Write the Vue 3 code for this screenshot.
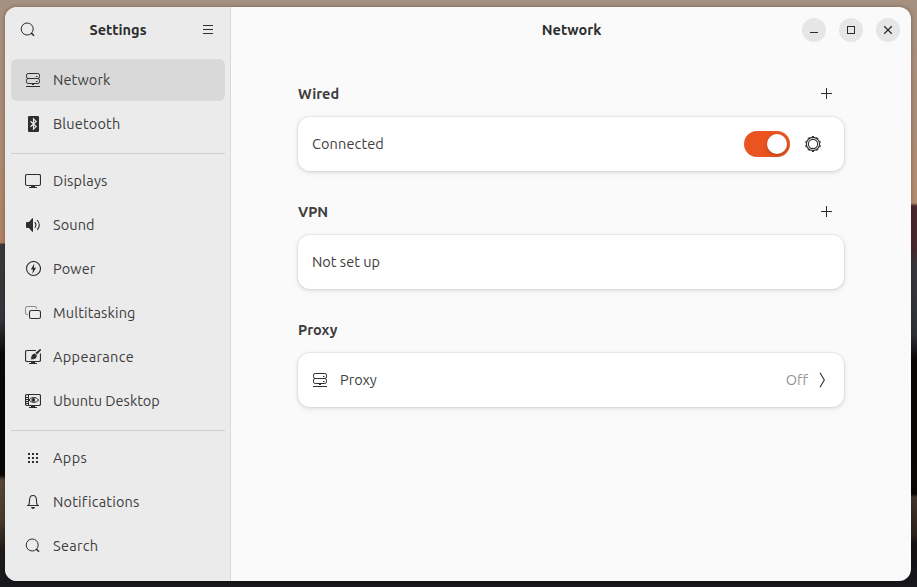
<template>
  <div class="desktop">
    <div class="window">
      <aside class="sidebar">
        <header class="sidebar-header">
          <button class="flat-btn" aria-label="Search">
            <svg class="icon" viewBox="0 0 16 16" v-html="icons.search"></svg>
          </button>
          <h1 class="title">Settings</h1>
          <button class="flat-btn" aria-label="Menu">
            <svg class="icon" viewBox="0 0 16 16" v-html="icons.menu"></svg>
          </button>
        </header>
        <nav class="nav">
          <div v-for="(group, i) in groups" :key="i" class="nav-group">
            <a
              v-for="item in group"
              :key="item.label"
              class="nav-item"
              :class="{ active: item.label === current }"
              @click="current = item.label"
            >
              <svg class="icon" viewBox="0 0 16 16" v-html="icons[item.icon]"></svg>
              <span :style="{ letterSpacing: item.spacing + 'px' }">{{ item.label }}</span>
            </a>
          </div>
        </nav>
      </aside>

      <main class="content">
        <header class="content-header">
          <h2 class="title">Network</h2>
          <div class="controls">
            <button v-for="name in ['minimize', 'maximize', 'close']" :key="name" class="control" :aria-label="name">
              <svg class="icon" viewBox="0 0 16 16" v-html="icons[name]"></svg>
            </button>
          </div>
        </header>

        <div class="sections">
          <section>
            <div class="section-head">
              <h3>Wired</h3>
              <svg class="icon" viewBox="0 0 16 16" v-html="icons.plus"></svg>
            </div>
            <div class="card">
              <span class="connected">Connected</span>
              <button class="switch" :class="{ on: wired }" aria-label="Wired" @click="wired = !wired">
                <span class="knob"></span>
              </button>
              <svg class="icon gear" viewBox="0 0 16 16" v-html="icons.gear"></svg>
            </div>
          </section>

          <section>
            <div class="section-head">
              <h3>VPN</h3>
              <svg class="icon" viewBox="0 0 16 16" v-html="icons.plus"></svg>
            </div>
            <div class="card">
              <span>Not set up</span>
            </div>
          </section>

          <section>
            <div class="section-head">
              <h3>Proxy</h3>
            </div>
            <div class="card">
              <svg class="icon lead" viewBox="0 0 16 16" v-html="icons.network"></svg>
              <span>Proxy</span>
              <span class="value">Off</span>
              <svg class="icon chevron" viewBox="0 0 16 16" v-html="icons.chevron"></svg>
            </div>
          </section>
        </div>
      </main>
    </div>
  </div>
</template>

<script setup>
import { ref } from 'vue';

const current = ref('Network');
const wired = ref(true);

const groups = [
  [
    { label: 'Network', icon: 'network', spacing: 0.12 },
    { label: 'Bluetooth', icon: 'bluetooth', spacing: 0.16 },
  ],
  [
    { label: 'Displays', icon: 'displays', spacing: 0.18 },
    { label: 'Sound', icon: 'sound', spacing: 0.1 },
    { label: 'Power', icon: 'power', spacing: 0.15 },
    { label: 'Multitasking', icon: 'multitasking', spacing: 0.15 },
    { label: 'Appearance', icon: 'appearance', spacing: 0.33 },
    { label: 'Ubuntu Desktop', icon: 'ubuntu', spacing: 0.01 },
  ],
  [
    { label: 'Apps', icon: 'apps', spacing: 0.4 },
    { label: 'Notifications', icon: 'bell', spacing: 0.19 },
    { label: 'Search', icon: 'search', spacing: 0.28 },
  ],
];

const line = 'fill="none" stroke="currentColor"';
const stand = '<path d="M6 12.5h4V14h2v1H4v-1h2z" fill="currentColor"/>';

// 3x3 grid of 2px squares
const dots = [3, 7, 11]
  .map((y) => [3, 7, 11].map((x) => `<rect x="${x}" y="${y}" width="2" height="2" fill="currentColor"/>`).join(''))
  .join('');

const icons = {
  search: `<circle cx="7.2" cy="7" r="6" ${line}/><path d="M11.2 11l2.8 2.8" ${line} stroke-width="1.6"/>`,
  menu: '<path d="M3 3h10v1H3zM3 7h10v1H3zM3 11h10v1H3z" fill="currentColor"/>',
  network: `<rect x="1.5" y="1.5" width="13" height="5" rx="1.7" ${line}/><rect x="1.5" y="6.5" width="13" height="5" rx="1.7" ${line}/><path d="M11 4h1.5v1H11zM11 9h1.5v1H11zM7 12h2v1H7zM1 14h14v1H1z" fill="currentColor"/>`,
  bluetooth: '<rect x="3" y="0" width="11" height="16" rx="1.3" fill="currentColor"/><path d="M5.5 5.2l5.7 5.4-2.7 2.6V2.8l2.7 2.6-5.7 5.4" fill="none" stroke="#ebebeb" stroke-width="1.2"/>',
  displays: `<rect x=".5" y="1.5" width="15" height="11" rx="1.5" ${line} stroke-width="1.1"/>${stand}`,
  sound: `<path d="M1 6q0-1 1-1h2l3.2-3.7H8v13.4h-.8L4 11H2q-1 0-1-1z" fill="currentColor"/><path d="M9.8 5.2q2.2 2.8 0 5.6M12.2 3q4.2 5 0 10" ${line} stroke-width="1.1"/>`,
  power: `<circle cx="8.5" cy="7.5" r="7" ${line} stroke-width="1.1"/><path d="M9.3 2.5L5.8 8.4h2.1l-.5 4.5 3.7-6.1H8.9z" fill="currentColor"/>`,
  multitasking: `<rect x="4.5" y="5.5" width="11" height="8" rx="1.8" ${line} stroke-width="1.1"/><path d="M11.5 3.8V3q0-1.5-1.5-1.5H2Q.5 1.5.5 3v5q0 1.5 1.5 1.5h1" ${line} opacity=".5"/>`,
  appearance: `<path d="M11 1.5H2Q.5 1.5.5 3v8q0 1.5 1.5 1.5h12q1.5 0 1.5-1.5V4.5" ${line} stroke-width="1.2"/>${stand}<path d="M15.2-.2L16.3 1l-4.3 4.5-1.7-1.4zM9.8 4.4l2 1.8c.3 2.8-2.3 4.4-6.5 4 1.4-.8.6-1.7 1.3-3.3.6-1.5 1.9-2.4 3.2-2.5z" fill="currentColor"/>`,
  ubuntu: `<rect x=".5" y="1.5" width="15" height="11" rx="1.5" ${line} stroke-width="1.2"/>${stand}<path d="M3.5 2v10M1 4.5h2M1 6.5h2M1 8.5h2M1 10.5h2" ${line}/><path d="M3.8 7Q8.8 1.7 13.8 7 8.8 12 3.8 7z" ${line}/><circle cx="8.3" cy="6.9" r="1.9" fill="currentColor"/>`,
  apps: dots,
  bell: `<path d="M2 11.5h12M3.5 11.4Q4.5 10 4.5 6.5q0-5 3.5-5t3.5 5q0 3.5 1 4.9" ${line} stroke-width="1.1"/><path d="M6 13h4q-.3 2-2 2t-2-2z" fill="currentColor"/>`,
  minimize: '<path d="M4 10h8v1H4z" fill="currentColor"/>',
  maximize: `<rect x="4.5" y="4.5" width="7" height="7" ${line}/>`,
  close: `<path d="M4.2 4.2l7.6 7.6M11.8 4.2l-7.6 7.6" ${line} stroke-width="1.3"/>`,
  plus: '<path d="M8 2h1v5h5v1H9v5H8V8H3V7h5z" fill="currentColor"/>',
  // the dashed outer ring is the ten teeth
  gear: `<circle cx="8" cy="8" r="6.6" ${line} stroke-width="1.1"/><circle cx="8" cy="8" r="7.4" ${line} stroke-width="1.1" pathLength="100" stroke-dasharray="5 5" stroke-dashoffset="2.5" transform="rotate(-90 8 8)"/><circle cx="8" cy="8" r="4.6" ${line} stroke-width="1.1"/>`,
  chevron: `<path d="M6 .8L10.3 8 6 15.2" ${line} stroke-width="1.1"/>`,
};
</script>

<style>
body {
  margin: 0;
  overflow: hidden;
}
</style>

<style scoped>
.desktop {
  box-sizing: border-box;
  width: 917px;
  height: 587px;
  padding: 7px 6px 6px 5px;
  font-family: Ubuntu, "Open Sans", "Noto Sans", sans-serif;
  font-size: 14.5px;
  font-variant-ligatures: none;
  line-height: 20px;
  color: #3d3d3d;
  background:
    linear-gradient(#18171b, #18171b) 0 581px / 917px 6px no-repeat,
    linear-gradient(#a6907f 0, #ac8b73 150px, #b08260 243px, #3b393c 244px, #35343b 320px, #0c0806 355px, #080503 475px, #57483b 480px, #4a3b2f 520px, #211b19 550px, #18171b 100%) 0 0 / 458px 587px no-repeat,
    linear-gradient(#a6907f 0, #aa8d79 120px, #b48c6d 203px, #49272c 206px, #46292e 250px, #38373c 265px, #303139 335px, #090604 360px, #0a0705 494px, #41342a 497px, #2c231d 535px, #131112 545px, #18171b 100%) 458px 0 / 459px 587px no-repeat;
}
.window {
  display: flex;
  height: 574px;
  border-radius: 12px;
  overflow: hidden;
  background: #fafafa;
  box-shadow: 0 0 4px rgba(0, 0, 0, 0.3);
}
button {
  padding: 0;
  border: 0;
  background: none;
  color: inherit;
}
.icon {
  display: block;
  flex: none;
  width: 16px;
  height: 16px;
  color: #2e2e2e;
}
h1,
h2,
h3 {
  margin: 0;
  font-size: 14.5px;
  font-weight: 700;
}
.title {
  color: #2d2d2d;
}

.sidebar {
  box-sizing: border-box;
  width: 226px;
  flex: none;
  background: #ebebeb;
  border-right: 1px solid #d9d9d9;
}
.sidebar-header {
  display: flex;
  align-items: center;
  justify-content: space-between;
  height: 46px;
  padding: 0 14px 0 15px;
}
.nav {
  padding: 6px 5px 0 6px;
}
.nav-group {
  display: flex;
  flex-direction: column;
  gap: 2px;
}
.nav-group + .nav-group {
  margin-top: 8px;
  padding-top: 6px;
  border-top: 1px solid #cfcfcf;
}
.nav-item {
  display: flex;
  align-items: center;
  gap: 12px;
  height: 42px;
  padding-left: 14px;
  border-radius: 6px;
  white-space: nowrap;
}
.nav-item.active {
  background: #d9d9d9;
}

.content {
  flex: 1;
}
.content-header {
  display: grid;
  grid-template-columns: 1fr auto 1fr;
  align-items: center;
  height: 46px;
  padding: 0 11px 0 12px;
}
.content-header .title {
  grid-column: 2;
}
.controls {
  display: flex;
  justify-content: flex-end;
  gap: 13px;
}
.control {
  display: flex;
  align-items: center;
  justify-content: center;
  width: 24px;
  height: 24px;
  border-radius: 50%;
  background: #e6e6e6;
}
.sections {
  display: flex;
  flex-direction: column;
  gap: 24px;
  padding: 24px 67px 0;
}
.section-head {
  display: flex;
  align-items: center;
  justify-content: space-between;
  height: 34px;
  margin-bottom: 6px;
  padding-right: 10px;
}
.card {
  display: flex;
  align-items: center;
  box-sizing: border-box;
  height: 54px;
  padding: 0 14px;
  border-radius: 12px;
  background: #fff;
  box-shadow: 0 0 0 1px rgba(0, 0, 0, 0.04), 0 1px 3px 1px rgba(0, 0, 0, 0.07), 0 2px 6px 2px rgba(0, 0, 0, 0.03);
}
.connected {
  letter-spacing: 0.12px;
}
.switch {
  box-sizing: border-box;
  display: flex;
  width: 46px;
  height: 26px;
  margin-left: auto;
  padding: 3px;
  border-radius: 13px;
  background: #d0d0d0;
}
.switch.on {
  justify-content: flex-end;
  background: #e95420;
}
.knob {
  width: 20px;
  height: 20px;
  border-radius: 50%;
  background: #fff;
  box-shadow: 0 2px 4px rgba(0, 0, 0, 0.2);
}
.gear {
  margin: 0 9px 0 15px;
}
.lead {
  margin-right: 12px;
}
.value {
  margin-left: auto;
  color: #949494;
}
.chevron {
  margin-left: 6px;
}
</style>
